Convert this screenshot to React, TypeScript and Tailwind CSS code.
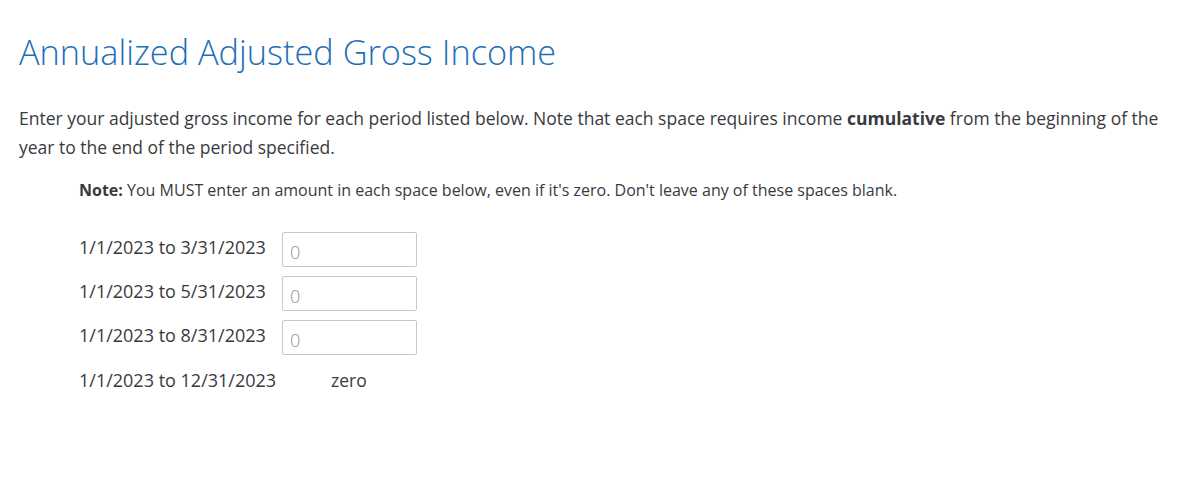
const periods = ["1/1/2023 to 3/31/2023", "1/1/2023 to 5/31/2023", "1/1/2023 to 8/31/2023"];

export default function App() {
  return (
    <div className="w-[1200px] h-[485px] bg-white text-[#393a3d] font-['Open_Sans',sans-serif] px-[19px] pt-[30px]">
      <h1 className="text-[34.3px] font-light leading-[44px] text-[#1f6fb5]">Annualized Adjusted Gross Income</h1>

      <p className="mt-[30px] text-[17.5px] leading-[29px]">
        Enter your adjusted gross income for each period listed below. Note that each space requires income{" "}
        <b className="font-bold">cumulative</b> from the beginning of the year to the end of the period specified.
      </p>

      <div className="pl-[60px]">
        <p className="mt-[16px] text-[16px] leading-[24px]">
          <b className="font-bold">Note:</b> You MUST enter an amount in each space below, even if it's zero. Don't
          leave any of these spaces blank.
        </p>

        <div className="mt-[30px] flex flex-col gap-[9px]">
          {periods.map((p) => (
            <div key={p} className="flex items-start gap-[15px]">
              <span className="w-[188px] text-[18px] leading-[28px] pt-[1px] whitespace-nowrap">{p}</span>
              <input
                defaultValue="0"
                className="w-[135px] h-[35px] border border-[#c4c7cc] rounded-[2px] px-[7px] pt-[5px] text-[18px] font-light text-[#8d9096] outline-none"
              />
            </div>
          ))}
          <div className="flex items-center mt-[2px]">
            <span className="w-[252px] text-[18px] leading-[28px] whitespace-nowrap">1/1/2023 to 12/31/2023</span>
            <span className="text-[17.5px]">zero</span>
          </div>
        </div>
      </div>
    </div>
  );
}
